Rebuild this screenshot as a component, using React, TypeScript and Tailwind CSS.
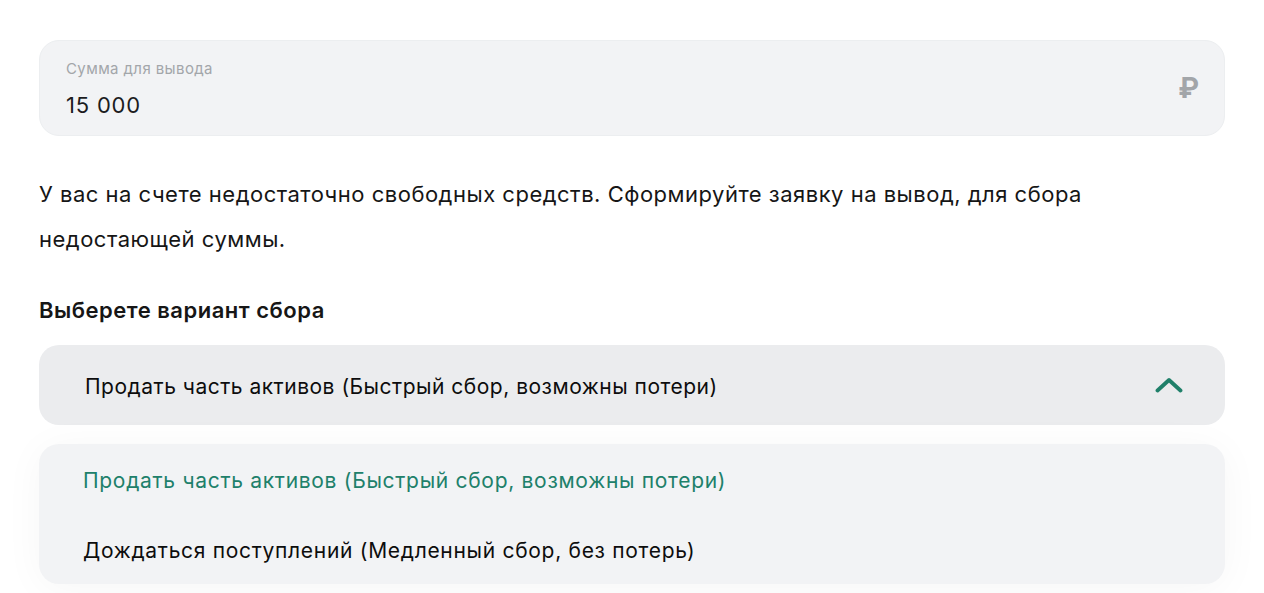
export default function App() {
  const options = [
    { label: 'Продать часть активов (Быстрый сбор, возможны потери)', active: true },
    { label: 'Дождаться поступлений (Медленный сбор, без потерь)', active: false },
  ]

  return (
    <div
      className="min-h-[593px] bg-white px-[39px] pt-[40px] text-[#1c1c1e]"
      style={{ fontFamily: 'Inter, "Noto Sans", sans-serif' }}
    >
      {/* amount field */}
      <div className="flex h-[96px] items-center justify-between rounded-[20px] border border-[#eceef0] bg-[#f2f3f5] pl-[26px] pr-[25px]">
        <div className="mt-[3px] flex flex-col">
          <span className="text-[15px] leading-[18px] tracking-[0.4px] text-[#a3a6aa]">Сумма для вывода</span>
          <span className="mt-[13px] text-[22px] leading-[28px] tracking-[0.8px] text-[#1c1c1e]">15 000</span>
        </div>
        <span className="text-[28px] font-bold leading-none text-[#a2a5a9]">₽</span>
      </div>

      <p className="mt-[36px] text-[22px] leading-[45px] tracking-[0.5px] text-[#161616]">
        У вас на счете недостаточно свободных средств. Сформируйте заявку на вывод, для сбора
        <br />
        недостающей суммы.
      </p>

      <h3 className="mt-[34px] text-[22px] font-semibold leading-[28px] tracking-[0.5px] text-[#161616]">
        Выберете вариант сбора
      </h3>

      {/* select */}
      <button className="mt-[21px] flex h-[80px] w-full items-center justify-between rounded-[20px] bg-[#ebecee] pl-[46px] pr-[42px] text-left">
        <span className="pt-[3px] text-[21px] leading-[28px] tracking-[0.5px] text-[#0d0d0d]">
          Продать часть активов (Быстрый сбор, возможны потери)
        </span>
        <svg width="28" height="16" viewBox="0 0 28 16" fill="none">
          <path
            d="M2.5 13.5 L14 3 L25.5 13.5"
            stroke="#20806a"
            strokeWidth="3.8"
            strokeLinecap="round"
            strokeLinejoin="round"
          />
        </svg>
      </button>

      <ul className="mt-[19px] rounded-[20px] bg-[#f2f3f5] shadow-[0_4px_40px_rgba(0,0,0,0.04)]">
        {options.map((o, i) => (
          <li
            key={i}
            className={
              'flex h-[70px] items-center pl-[44px] pt-[3px] text-[21px] leading-[28px] tracking-[0.7px] ' +
              (o.active ? 'text-[#20806a]' : 'text-[#0d0d0d]')
            }
          >
            {o.label}
          </li>
        ))}
      </ul>
    </div>
  )
}
